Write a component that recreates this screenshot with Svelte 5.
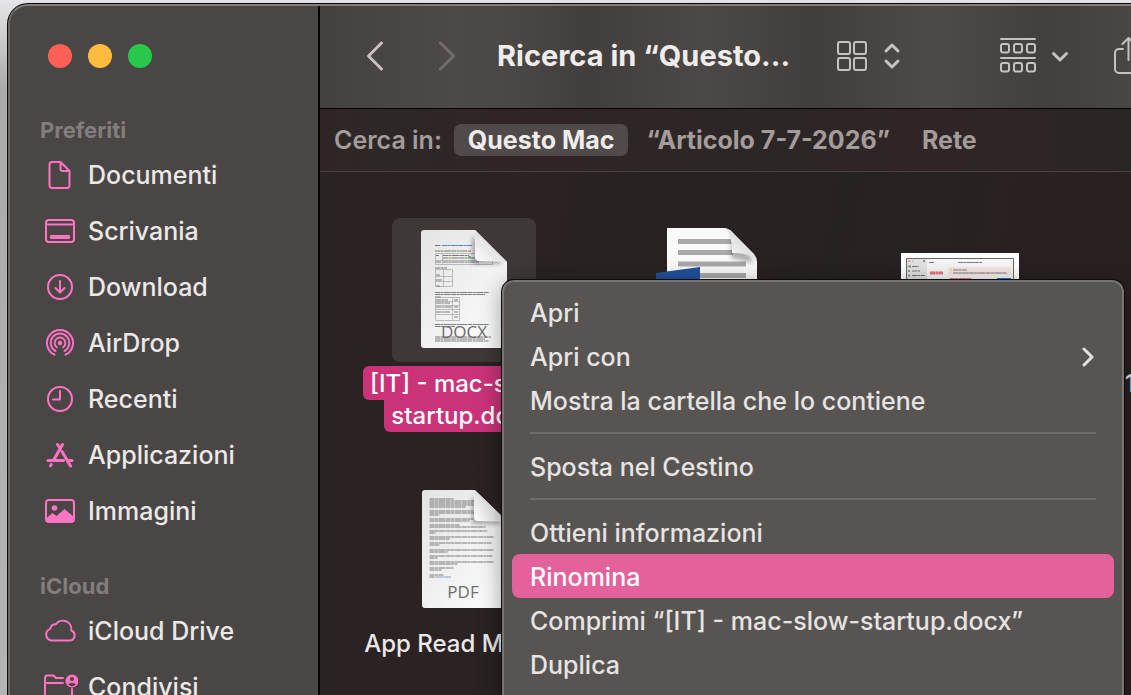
<script lang="ts">
  type Place = { name: string; icon: string };
  type File = { lines: string[]; kind: "docx" | "word" | "image" | "pdf" | "none"; selected?: boolean };

  const sections: { title: string; places: Place[] }[] = [
    {
      title: "Preferiti",
      places: [
        { name: "Documenti", icon: "doc" },
        { name: "Scrivania", icon: "desktop" },
        { name: "Download", icon: "download" },
        { name: "AirDrop", icon: "airdrop" },
        { name: "Recenti", icon: "clock" },
        { name: "Applicazioni", icon: "apps" },
        { name: "Immagini", icon: "image" },
      ],
    },
    {
      title: "iCloud",
      places: [
        { name: "iCloud Drive", icon: "cloud" },
        { name: "Condivisi", icon: "shared" },
      ],
    },
  ];

  const scopes = ["Questo Mac", "“Articolo 7-7-2026”", "Rete"];
  let scope = $state("Questo Mac");

  const files: File[] = [
    { lines: ["[IT] - mac-slow-", "startup.docx"], kind: "docx", selected: true },
    { lines: [], kind: "word" },
    { lines: [], kind: "image" },
    { lines: ["1"], kind: "none" },
    { lines: ["App Read Me.pdf"], kind: "pdf" },
  ];

  // groups are split by a separator line
  const menu = [
    ["Apri", "Apri con", "Mostra la cartella che lo contiene"],
    ["Sposta nel Cestino"],
    ["Ottieni informazioni", "Rinomina", "Comprimi “[IT] - mac-slow-startup.docx”", "Duplica"],
  ];
  let active = $state("Rinomina");

  // y and width of each line of body text on the PDF thumbnail
  const pdfText = [
    [9, 24], [11, 48], [13, 44], [15, 45], [17, 36], [21, 44], [23, 45], [25, 10],
    [29, 44], [31, 40], [35, 30], [37, 56], [41, 58], [43, 6], [47, 64], [49, 20],
    [53, 62], [55, 10], [60, 64], [62, 18], [66, 63], [68, 8], [72, 64], [74, 28],
    [78, 24], [80, 12], [85, 14], [87, 6],
  ];
</script>

<div class="desktop">
  <div class="window">
    <aside>
      <div class="lights">
        <button class="close" aria-label="Chiudi"></button>
        <button class="minimize" aria-label="Riduci"></button>
        <button class="zoom" aria-label="Ingrandisci"></button>
      </div>
      {#each sections as section}
        <nav>
          <h2>{section.title}</h2>
          {#each section.places as place}
            <a href="#{place.icon}">
              <svg viewBox="0 0 36 36" width="36" height="36">
                {#if place.icon === "doc"}
                  <path d="M10 5h8.500l9 9v14.500a2.500 2.500 0 0 1-2.500 2.500h-15a2.500 2.500 0 0 1-2.500-2.500v-21a2.500 2.500 0 0 1 2.500-2.500zM18.500 5v7a2 2 0 0 0 2 2h7" />
                {:else if place.icon === "desktop"}
                  <rect x="4" y="7" width="28" height="22" rx="3" />
                  <path d="M4 11.500h28" />
                  <rect class="fill" x="8" y="22" width="20" height="4" rx="1" />
                {:else if place.icon === "download"}
                  <circle cx="18" cy="18" r="12" />
                  <path d="M18 12v11M13.500 19l4.500 4.500 4.500-4.500" />
                {:else if place.icon === "airdrop"}
                  <path d="M12.500 29.700a13 13 0 1 1 11 0M13.500 26a9.300 9.300 0 1 1 9 0M14.800 22.300a5.400 5.400 0 1 1 6.400 0" />
                  <circle class="fill" cx="18" cy="18" r="2.300" />
                {:else if place.icon === "clock"}
                  <circle cx="18" cy="18" r="12" />
                  <path d="M18 10v8.500h-7" />
                {:else if place.icon === "apps"}
                  <g class="thick">
                    <path d="M15.500 7.500l2 3M20.500 7.500l-8.500 15M6 23.500h15.500M20 14.500l8.500 14.500M26 23.500h4M8.500 28.800l.8-1.300" />
                  </g>
                {:else if place.icon === "image"}
                  <rect x="4" y="7" width="28" height="22" rx="3" />
                  <circle class="fill" cx="12.500" cy="15" r="2.800" />
                  <path class="fill" d="M4 25.500l6.500-5.500 4 3 8-7 9.500 8v3a2 2 0 0 1-2 2H6a2 2 0 0 1-2-2z" />
                {:else if place.icon === "cloud"}
                  <path d="M9.500 27.500a6 6 0 0 1-1.300-11.600 5.200 5.200 0 0 1 5.800-4.700 8.500 8.500 0 0 1 15.300 6.300 5.200 5.200 0 0 1-1.300 10z" />
                {:else}
                  <path d="M21 9h-7l-2.500-2.500h-6a2.500 2.500 0 0 0-2.500 2.500v18a3 3 0 0 0 3 3h22a2 2 0 0 0 2-2v-8M3 14h18" />
                  <circle class="fill" cx="30" cy="12" r="6.500" />
                  <circle class="hole" cx="30" cy="10" r="2" />
                  <path class="hole" d="M26.300 15.500a4 3 0 0 1 7.400 0 5 5 0 0 1-7.400 0z" />
                {/if}
              </svg>
              <span>{place.name}</span>
            </a>
          {/each}
        </nav>
      {/each}
    </aside>

    <main>
      <header>
        <button class="arrow" aria-label="Indietro">
          <svg viewBox="0 0 18 30" width="18" height="30"><path d="M15.500 2L2.500 15l13 13" /></svg>
        </button>
        <button class="arrow off" aria-label="Avanti" disabled>
          <svg viewBox="0 0 18 30" width="18" height="30"><path d="M2.500 2l13 13-13 13" /></svg>
        </button>
        <h1>Ricerca in “Questo...</h1>
        <button class="tool view" aria-label="Vista">
          <svg viewBox="0 0 66 36" width="66" height="36">
            <rect x="2" y="4" width="12" height="12" rx="2" />
            <rect x="18" y="4" width="12" height="12" rx="2" />
            <rect x="2" y="20" width="12" height="12" rx="2" />
            <rect x="18" y="20" width="12" height="12" rx="2" />
            <path class="bold" d="M50 13l6-6 6 6M50 23l6 6 6-6" />
          </svg>
        </button>
        <button class="tool group" aria-label="Raggruppa">
          <svg viewBox="0 0 70 38" width="70" height="38">
            <path d="M2 2h34M2 21h34" />
            {#each [2, 15, 28] as x}
              <rect {x} y="7" width="8" height="8.500" rx="2" />
              <rect {x} y="26" width="8" height="8.500" rx="2" />
            {/each}
            <path class="bold" d="M54.500 16.500l6.500 6.500 6.500-6.500" />
          </svg>
        </button>
        <button class="tool" aria-label="Condividi">
          <svg viewBox="0 0 32 38" width="32" height="38">
            <path d="M10 12h-4a4 4 0 0 0-4 4v16a4 4 0 0 0 4 4h19a4 4 0 0 0 4-4V16a4 4 0 0 0-4-4h-4M15.500 23V2M9.500 7l6-6 6 6" />
          </svg>
        </button>
      </header>

      <div class="scopes">
        <span>Cerca in:</span>
        {#each scopes as s}
          <button class:on={scope === s} onclick={() => (scope = s)}>{s}</button>
        {/each}
      </div>

      <div class="files">
        {#each files as file}
          <figure class:selected={file.selected}>
            <div class="thumb">
              {#if file.kind === "docx"}
                <svg viewBox="0 0 88 120" width="88" height="120">
                  <defs>
                    <linearGradient id="paper" x1="0" y1="0" x2="1" y2="1">
                      <stop offset="0" stop-color="#e4e4e4" />
                      <stop offset=".5" stop-color="#f1f1f1" />
                      <stop offset="1" stop-color="#fff" />
                    </linearGradient>
                    <linearGradient id="fold" x1="0" y1="1" x2="1" y2="0">
                      <stop offset="0" stop-color="#fff" />
                      <stop offset=".5" stop-color="#e2e2e2" />
                    </linearGradient>
                    <filter id="soft" x="-30%" y="-30%" width="160%" height="160%">
                      <feGaussianBlur stdDeviation="2" />
                    </filter>
                  </defs>
                  <path fill="url(#paper)" d="M4 0h51l32 32v83a3 3 0 0 1-3 3H4a3 3 0 0 1-3-3V3a3 3 0 0 1 3-3z" />
                  <g class="print">
                    <path d="M15 15.500h6M15 38h12M15 62.500h54M15 64.500h50M15 67h6M15 94.500h54M15 96.500h20M15 107h56M15 109h50M15 111h54" />
                    <path stroke="#2465d8" d="M22 15.500h30" />
                    <path d="M15 21h36M23 25.500h26M23 28h34M23 32h36M16 25.500h3M16 32h5M16 45h4M16 50h6M16 56h4M16 70h12M16 73h14M16 77h16M16 82h14M34 70h4M34 77h4M34 82h4M34 87h4" />
                    <path stroke="#d9b64c" d="M29 27.500h3" />
                    <path stroke="#4caf50" stroke-width="2" d="M48 27h3" />
                  </g>
                  <path class="rule" d="M15.500 23.500h57v11h-57zM22.500 23.500v11M15.500 30.500h57M15.500 39.500h17v17h-17zM23.500 39.500v17M15.500 46.500h17M15.500 51.500h17M15.500 67.500h24v23h-24zM32.500 67.500v23M15.500 71.500h24M15.500 75.500h24M15.500 79.500h24M15.500 84.500h24" />
                  <text class="tag" x="44" y="108">DOCX</text>
                  <path class="shade" filter="url(#soft)" d="M52 6v28h30l-3-6z" />
                  <path fill="url(#fold)" d="M55 0v28a4 4 0 0 0 4 3l28 1z" />
                </svg>
              {:else if file.kind === "pdf"}
                <svg viewBox="0 0 88 120" width="88" height="120">
                  <path fill="url(#paper)" d="M5 0h50l33 32v83a3 3 0 0 1-3 3H5a3 3 0 0 1-3-3V3a3 3 0 0 1 3-3z" />
                  <g class="print">
                    {#each pdfText as [y, w]}
                      <path d="M9.500 {y}h{w}" />
                    {/each}
                    <path stroke="#5a7fe0" d="M16 87h15" />
                  </g>
                  <text class="tag" x="43" y="108">PDF</text>
                  <path class="shade" filter="url(#soft)" d="M52 6v28h30l-3-6z" />
                  <path fill="url(#fold)" d="M54 0v27a4 4 0 0 0 4 4l30 1z" />
                </svg>
              {:else if file.kind === "word"}
                <svg viewBox="0 0 112 124" width="112" height="124">
                  <path fill="#fafafa" d="M11 0h56q6 0 10 5l20 20q4 4 4 9v90H11z" />
                  <path stroke="#a9a9a9" stroke-width="5" d="M22 13.500h55M22 24.500h55M22 36h68M22 47.500h68" />
                  <path class="shade" filter="url(#soft)" d="M75 8v22l23 5-4-7z" />
                  <path fill="url(#fold)" d="M67 0q9 3 9 25 16-1 24 7-1-4-4-7L77 5q-4-5-10-5z" />
                  <path fill="#22509b" d="M0 45l44-6v70l-44-6z" />
                </svg>
              {:else if file.kind === "image"}
                <svg viewBox="0 0 118 74" width="118" height="74">
                  <path fill="#fff" d="M0 0h118v74H0z" />
                  <path fill="#f5f5f5" stroke="#666" d="M5.500 5.500h107v63H5.500z" />
                  <path fill="#e2e2e2" d="M6 6h20v62H6z" />
                  <path fill="#f7e6e2" d="M47 14h63v8H47z" />
                  <g class="print">
                    <path d="M28 9.500h5M57 9.500h24M11 13.500h7M11 18h8M11 22.500h13M52 17h14M52 20h54" />
                    <path stroke="#e34a4a" d="M49 25.500h22M7 8h2" />
                    <path stroke="#f2b63c" d="M49 17h2M9 8h1" />
                    <path stroke="#54c058" d="M11 8h1" />
                    <path stroke="#777" stroke-width="2" d="M7 13.500h3M7 18h2M7 22.500h2M22 8h2" />
                    <path stroke="#e34a4a" stroke-width="3" d="M29 20h13" />
                  </g>
                  <path fill="#1f6fe8" d="M96 25h14v4H96z" />
                </svg>
              {/if}
            </div>
            {#if file.lines.length}
              <figcaption>
                {#each file.lines as line}
                  <span>{line}</span>
                {/each}
              </figcaption>
            {/if}
          </figure>
        {/each}
      </div>
    </main>
  </div>

  <div class="menu" role="menu">
    {#each menu as group, i}
      {#if i > 0}
        <hr />
      {/if}
      {#each group as item}
        <button role="menuitem" class:active={active === item} onmouseenter={() => (active = item)}>
          {item}
          {#if item === "Apri con"}
            <svg viewBox="0 0 14 22" width="14" height="22"><path d="M2 3l8 8-8 8" /></svg>
          {/if}
        </button>
      {/each}
    {/each}
  </div>
</div>

<style>
  :global(body) {
    overflow: hidden;
  }
  .desktop {
    --pink: #ff73c3;
    position: relative;
    box-sizing: border-box;
    height: 100vh;
    padding: 4px 0 0 8px;
    overflow: hidden;
    background: linear-gradient(#e6e6e8, #a9a9a9 90px, #b4b4b4);
    font-family: Inter, "Liberation Sans", sans-serif;
    font-size: 25px;
    font-weight: 500;
    color: #ebe9e8;
  }
  .window {
    display: flex;
    box-sizing: border-box;
    height: 100%;
    border-top: 2px solid #807d7b;
    border-left: 2px solid #6b6867;
    border-top-left-radius: 20px;
    box-shadow: 0 0 0 1px #0c0b0b, 0 -2px 3px #dcdcdf;
    background: #4a4645;
    overflow: hidden;
  }
  button {
    margin: 0;
    padding: 0;
    border: 0;
    background: none;
    color: inherit;
    font: inherit;
  }
  svg {
    flex: none;
    display: block;
  }

  aside {
    flex: none;
    box-sizing: border-box;
    width: 310px;
    border-right: 2px solid #000;
  }
  .lights {
    display: flex;
    gap: 16px;
    padding: 38px 38px 45px;
  }
  .lights button {
    width: 24px;
    height: 24px;
    border-radius: 50%;
  }
  .close {
    background: #ff5f57;
  }
  .minimize {
    background: #febc3e;
  }
  .zoom {
    background: #28c84b;
  }
  nav {
    margin-bottom: 30px;
  }
  h2 {
    margin: 0;
    padding-left: 30px;
    font-size: 22px;
    font-weight: 700;
    line-height: 34px;
    color: #827e7d;
  }
  nav a {
    display: flex;
    align-items: center;
    gap: 10px;
    height: 56px;
    padding-left: 32px;
    color: inherit;
    text-decoration: none;
  }
  nav svg {
    fill: none;
    stroke: var(--pink);
    stroke-width: 2;
    stroke-linecap: round;
    stroke-linejoin: round;
  }
  nav .fill {
    fill: var(--pink);
    stroke: none;
  }
  nav .hole {
    fill: #4a4645;
    stroke: none;
  }
  nav .thick {
    stroke-width: 3;
  }

  main {
    flex: 1;
    display: flex;
    flex-direction: column;
    min-width: 0;
    background: linear-gradient(100deg, #2c2224, #272222 60%, #2a1f20);
  }
  header {
    box-sizing: border-box;
    display: flex;
    align-items: center;
    height: 103px;
    padding: 0 0 3px 19px;
    border-bottom: 1px solid #000;
    background: linear-gradient(90deg, #454140, #4d4947 16%, #4b4745 24%, #423e3c 33%, #4c4846 47%, #423e3c 61%, #4d4a48 76%, #433f3d 89%, #4a4645);
    overflow: hidden;
  }
  header button {
    flex: none;
    display: flex;
    justify-content: center;
    color: #c6c2c0;
  }
  header svg {
    fill: none;
    stroke: currentColor;
    stroke-width: 2;
    stroke-linecap: round;
    stroke-linejoin: round;
  }
  header .arrow {
    width: 72px;
  }
  header .arrow svg {
    stroke-width: 3;
  }
  header .off {
    color: #716d6b;
  }
  header .bold {
    stroke-width: 3;
  }
  h1 {
    flex: none;
    width: 325px;
    margin: 0 0 0 14px;
    font-size: 29px;
    font-weight: 700;
    white-space: nowrap;
    color: #efedec;
  }
  header .view {
    margin: 0 97px 0 14px;
  }
  header .group {
    margin-right: 44px;
  }

  .scopes {
    display: flex;
    align-items: center;
    height: 62px;
    padding-left: 14px;
    border-bottom: 1px solid #4b4444;
    background: linear-gradient(90deg, #302526, #2d2727 8%, #302526 25%, #2c2626 55%, #302526 75%, #2a2525);
    font-size: 25px;
    font-weight: 700;
    white-space: nowrap;
    color: #a39c9b;
  }
  .scopes span {
    margin-right: 12px;
    font-weight: 600;
  }
  .scopes button {
    height: 32px;
    margin-right: 4px;
    padding: 0 14px;
    border-radius: 7px;
    line-height: 32px;
  }
  .scopes .on {
    background: #514a4a;
    color: #efedec;
  }

  .files {
    flex: 1;
    display: grid;
    grid-template-columns: repeat(4, 248px);
    grid-auto-rows: 260px;
    padding: 46px 0 0 20px;
    overflow: hidden;
  }
  figure {
    display: flex;
    flex-direction: column;
    align-items: center;
    gap: 6px;
    margin: 0;
  }
  .thumb {
    flex: none;
    display: flex;
    align-items: center;
    justify-content: center;
    width: 144px;
    height: 144px;
    border-radius: 8px;
  }
  .selected .thumb {
    background: #3e3838;
  }
  figcaption {
    display: flex;
    flex-direction: column;
    align-items: center;
    min-width: 166px;
    font-size: 24px;
    line-height: 32px;
    white-space: nowrap;
  }
  figcaption span {
    align-self: stretch;
  }
  .selected span {
    align-self: center;
    padding: 0 7px;
    border-radius: 0 0 6px 6px;
    background: #cb3379;
    color: #fff;
  }
  .selected span:first-child {
    margin-top: -2px;
    padding-top: 2px;
    border-radius: 6px;
  }
  .print {
    fill: none;
    stroke: #555;
    stroke-width: 1;
    stroke-dasharray: 5 0.4 3 0.4 7 0.4;
    opacity: 0.75;
  }
  .rule {
    fill: none;
    stroke: #999;
    stroke-opacity: 0.6;
  }
  .tag {
    font-family: "Open Sans", sans-serif;
    font-size: 17px;
    text-anchor: middle;
    fill: #6e6e6e;
  }
  .shade {
    fill: #000;
    fill-opacity: 0.3;
  }

  .menu {
    position: absolute;
    top: 280px;
    bottom: -20px;
    left: 502px;
    box-sizing: border-box;
    width: 622px;
    padding: 8px;
    border: 2px solid #777472;
    border-radius: 12px;
    background: #585452;
    box-shadow: 0 0 0 1px #0e0c0c, 0 4px 24px rgba(0, 0, 0, 0.4);
    color: #e6e4e3;
  }
  .menu button {
    display: flex;
    align-items: center;
    justify-content: space-between;
    width: 100%;
    height: 44px;
    padding: 2px 18px 0;
    border-radius: 8px;
    text-align: left;
    white-space: nowrap;
  }
  .menu .active {
    background: #e4629b;
    color: #fff;
  }
  .menu hr {
    height: 2px;
    margin: 10px 18px;
    border: 0;
    background: #6e6b69;
  }
  .menu svg {
    fill: none;
    stroke: currentColor;
    stroke-width: 3;
    stroke-linecap: round;
    stroke-linejoin: round;
  }
</style>
